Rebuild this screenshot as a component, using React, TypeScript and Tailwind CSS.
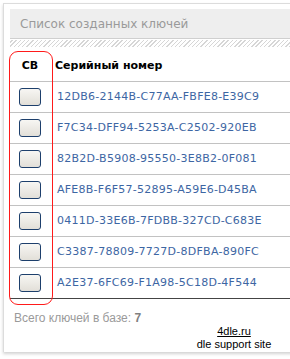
import React from 'react';

const KEYS = [
  '12DB6-2144B-C77AA-FBFE8-E39C9',
  'F7C34-DFF94-5253A-C2502-920EB',
  '82B2D-B5908-95550-3E8B2-0F081',
  'AFE8B-F6F57-52895-A59E6-D45BA',
  '0411D-33E6B-7FDBB-327CD-C683E',
  'C3387-78809-7727D-8DFBA-890FC',
  'A2E37-6FC69-F1A98-5C18D-4F544',
];

function Checkbox() {
  return (
    <span className="block w-[22px] h-[18px] rounded-[3px] border border-[#1d3f6c] bg-[linear-gradient(#f7f6f3,#e2dfd8)]" />
  );
}

export default function App() {
  return (
    <div className="w-[290px] h-[359px] bg-white overflow-hidden font-['DejaVu_Sans',sans-serif]">
      <div className="ml-[3px] mt-[3px] w-[300px] h-[349px] bg-white border-l border-t border-[#dcdcdc] shadow-[0_2px_3px_rgba(0,0,0,0.18)] pl-[6px] pt-[5px]">
        {/* заголовок */}
        <div className="h-[30px] bg-[#eeeeee] border-b border-[#cfcfcf] flex items-center pl-[10px] text-[12px] text-[#9a9a9a]">
          Список созданных ключей
        </div>
        <div className="h-[7px] mt-[1px] bg-[repeating-linear-gradient(-45deg,#d6d6d6_0px,#d6d6d6_1px,#ffffff_1px,#ffffff_3px)]" />

        {/* таблица */}
        <div className="relative mt-[4px]">
          <div className="absolute left-[-1px] top-0 w-[44px] h-[254px] rounded-[9px] border border-[#ff1a1a] pointer-events-none" />
          <div className="flex h-[31px] border-b border-[#c2c2c2] items-center text-[11px] font-bold text-black">
            <div className="w-[40px] text-center">СВ</div>
            <div className="pl-[5px]">Серийный номер</div>
          </div>
          {KEYS.map((k, i) => (
            <div
              key={k}
              className={
                'flex h-[31px] items-center border-b ' +
                (i === KEYS.length - 1 ? 'border-[#444444]' : 'border-[#c2c2c2]')
              }
            >
              <div className="w-[40px] flex justify-center">
                <Checkbox />
              </div>
              <div className="pl-[7px] text-[11px] tracking-[0.25px] text-[#3d66a3]">{k}</div>
            </div>
          ))}
        </div>

        {/* итог */}
        <div className="mt-[12px] pl-[4px] text-[12px] text-[#9a9a9a] leading-[14px] font-['Liberation_Sans',sans-serif]">
          Всего ключей в базе: <b className="text-[#808080]">7</b>
        </div>
        <div className="w-[200px] ml-[124px] flex flex-col items-center text-[11px] leading-[13px] text-black font-['Liberation_Sans',sans-serif]">
          <span className="underline">4dle.ru</span>
          <span>dle support site</span>
        </div>
      </div>
    </div>
  );
}
